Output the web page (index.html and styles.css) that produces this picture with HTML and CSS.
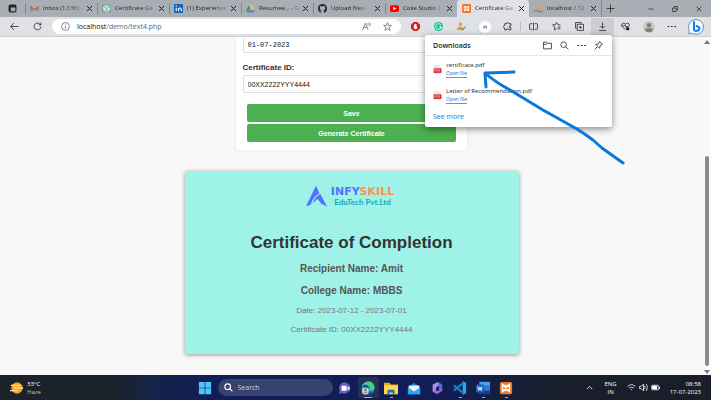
FILE: index.html
```html
<!DOCTYPE html>
<html lang="en">
<head>
<meta charset="utf-8">
<title>Certificate Generator</title>
<link rel="stylesheet" href="styles.css">
</head>
<body>
<header class="tabbar">
  <button class="workspace" aria-label="Tab actions"><svg class="ic" viewBox="0 0 16 16"><rect x="2" y="2" width="12" height="12" rx="2" fill="none" stroke="#222" stroke-width="2"/><path d="M2 2h12v4H2zM2 6h3v7H2z" fill="#222"/></svg></button>
  <nav class="tabs">
    <a class="tab" href="#"><svg class="ic" viewBox="0 0 16 16"><path d="M1 3v10h3V7z" fill="#5b8bd8"/><path d="M15 3v10h-3V7z" fill="#55a66b"/><path d="M1 3l7 6 7-6v4l-7 5-7-5z" fill="#df5547"/></svg><span>Inbox (1,136) -</span><i class="x"></i></a>
    <a class="tab" href="#"><svg class="ic" viewBox="0 0 16 16"><rect width="16" height="16" rx="3" fill="#75ac98"/><g fill="none" stroke="#fff" stroke-width="1.2"><path d="M8 2l5 3v6l-5 3-5-3V5z"/><path d="M5 4l6 4v5M11 4L5 8v4M3 7l5 3 5-3"/></g></svg><span>Certificate Ge</span><i class="x"></i></a>
    <a class="tab" href="#"><svg class="ic" viewBox="0 0 16 16"><rect width="16" height="16" rx="1" fill="#0a66c2"/><path d="M4 7v6M8 13V7m0 3q0-3 2.500-3T13 10v3" fill="none" stroke="#fff" stroke-width="2"/><circle cx="4" cy="4" r="1.300" fill="#fff"/></svg><span>(1) Experience</span><i class="x"></i></a>
    <a class="tab" href="#"><svg class="ic" viewBox="0 0 16 16"><path d="M5.500 2L0 11l3 4 5-9z" fill="#39a266"/><path d="M5.500 2h5L16 11h-5z" fill="#f1c344"/><path d="M5 11h11l-3 4H3z" fill="#4b82dc"/></svg><span>Resumee... - G</span><i class="x"></i></a>
    <a class="tab" href="#"><svg class="ic" viewBox="0 0 16 16"><path d="M8 0a8 8 0 0 0-2.500 15.600V13C3.500 13.500 3 12 2.500 11.500L2 11c2-.3 2 1.500 3.500 1l.5-1.300C3 10.300 3 8 3.200 6.500L4 5l-.1-2L6 4h4l2.100-1L12 5l.8 1.500c.3 2 0 3.800-2.800 4.200l.5 1.500v3.400A8 8 0 0 0 8 0z" fill="#24292f"/></svg><span>Upload files -</span><i class="x"></i></a>
    <a class="tab" href="#"><svg class="ic" viewBox="0 0 16 16"><rect y="2" width="16" height="12" rx="3" fill="#f00"/><path d="M6 5l5 3-5 3z" fill="#fff"/></svg><span>Coke Studio |</span><i class="x"></i></a>
    <a class="tab active" href="#"><svg class="ic" viewBox="0 0 16 16"><rect width="16" height="16" rx="2" fill="#f37623"/><path d="M4 4l8 8M12 4l-8 8M4 4q4 3 8 0v8q-4-3-8 0z" fill="none" stroke="#fff" stroke-width="1.600"/></svg><span>Certificate Ge</span><i class="x"></i></a>
    <a class="tab" href="#"><svg class="ic" viewBox="0 0 16 16"><path d="M1 12L7 2v10zM8 4q5 2 5 8H8z" fill="#f89c2c"/><path d="M0 13q5-3 8 0t8-1" fill="none" stroke="#6c78af" stroke-width="2"/></svg><span>localhost / 12</span><i class="x"></i></a>
  </nav>
  <button class="newtab" aria-label="New tab"><svg class="ic" viewBox="0 0 16 16"><path class="ln" d="M8 1v14M1 8h14"/></svg></button>
  <div class="wincontrols">
    <button aria-label="Minimize"><svg class="small" viewBox="0 0 12 12"><path class="ln" d="M1 6h10"/></svg></button>
    <button aria-label="Restore"><svg class="small" viewBox="0 0 12 12"><path class="ln" d="M1 4h7v7H1zM4 3V1h7v7H9"/></svg></button>
    <button aria-label="Close"><svg class="small" viewBox="0 0 12 12"><path class="ln" d="M1 1l10 10M11 1L1 11"/></svg></button>
  </div>
</header>
<div class="toolbar">
  <button class="tool" aria-label="Back"><svg class="ic" viewBox="0 0 16 16"><path class="ln" d="M15 8H1M7 2L1 8l6 6"/></svg></button>
  <button class="tool" aria-label="Refresh"><svg class="ic" viewBox="0 0 16 16"><path class="ln" d="M14 8a6 6 0 1 1-2-4.500L14 5M14 1v4h-4"/></svg></button>
  <div class="address">
    <svg class="ic" viewBox="0 0 16 16"><circle class="lg" cx="8" cy="8" r="7"/><path class="lg" d="M8 7v5M8 4v1.500"/></svg>
    <p class="url"><b>localhost</b>/demo/text4.php</p>
    <button aria-label="Read aloud"><svg class="ic" viewBox="0 0 16 16"><path class="lg" d="M1 14L6 2l5 12M3 10h6M10 2q2 2 0 4M13 1q3 3 0 7"/></svg></button>
    <button aria-label="Add to favorites"><svg class="ic" viewBox="0 0 16 16"><path class="lg" d="M8 1l2 5h5l-4 3.500 1.500 5.500L8 12l-4.500 3L5 9.500 1 6h5z"/></svg></button>
  </div>
  <button class="tool" aria-label="AdBlock"><svg class="ic" viewBox="0 0 16 16"><path d="M5 0h6l5 5v6l-5 5H5l-5-5V5z" fill="#e01414"/><path d="M5 5v5l2 3h3l2-5-2 1V4H9V3H7v1z" fill="#fff"/></svg></button>
  <button class="tool" aria-label="Grammarly"><svg class="ic" viewBox="0 0 16 16"><circle cx="8" cy="8" r="8" fill="#15c39a"/><path d="M12 5a5 5 0 1 0 1 4H9M11 8l2 1-1 3" fill="none" stroke="#fff" stroke-width="1.600"/></svg></button>
  <button class="tool" aria-label="Verified contacts"><svg class="ic" viewBox="0 0 16 16"><circle cx="6" cy="4" r="3" fill="#f19636"/><path d="M0 14q0-6 6-6 4 0 5 3l-3 3z" fill="#f19636"/><path d="M8 12l2 2 5-6" fill="none" stroke="#36a852" stroke-width="2"/></svg></button>
  <button class="tool" aria-label="Extension"><svg class="disc" viewBox="0 0 16 16"><circle cx="8" cy="8" r="8" fill="#fff"/><path d="M6 6h1.500v4H6zM9 6h1.500v4H9zM6 7.500h4v1H6z" fill="#6674c8"/></svg></button>
  <button class="tool" aria-label="Extensions"><svg class="ic" viewBox="0 0 16 16"><path class="ln" d="M3 3h3q0-2 2-2t2 2h4v4q-3-1-3 1.500t3 1.500v4h-4q0-2-2-2t-2 2H3v-3Q1 11 1 8.500T3 6z"/></svg></button>
  <span class="rule"></span>
  <button class="tool" aria-label="Split screen"><svg class="ic" viewBox="0 0 16 16"><path class="ln" d="M8 1v14M6 3H2q-1 0-1 1v8q0 1 1 1h4M10 3h4q1 0 1 1v8q0 1-1 1h-4"/></svg></button>
  <button class="tool" aria-label="Favorites"><svg class="ic" viewBox="0 0 16 16"><path class="ln" d="M15 5h-4L8 1 6 5H1l4 4-1 5 4-2M10 9h5M10 12h5"/></svg></button>
  <button class="tool" aria-label="Collections"><svg class="ic" viewBox="0 0 16 16"><path class="ln" d="M3 11H1V1h10v2M4 4h11v11H4zM9.500 7v5M7 9.500h5"/></svg></button>
  <button class="tool pressed" aria-label="Downloads"><svg class="ic" viewBox="0 0 16 16"><path class="ln" d="M8 1v10M4 7l4 4 4-4M2 15h12"/></svg></button>
  <button class="tool" aria-label="Browser essentials"><svg class="ic" viewBox="0 0 16 16"><path class="ln" d="M8 14L2 8Q0 5 2 3q3-3 6 1 3-4 6-1 2 2 0 5M1 7h4l2-2 2 5 1-2h3"/><circle cx="12" cy="12" r="3" fill="#222"/></svg></button>
  <button class="tool" aria-label="Profile"><svg class="disc" viewBox="0 0 16 16"><circle cx="8" cy="8" r="8" fill="#cbc8c4"/><circle cx="8" cy="5.500" r="3" fill="#827d79"/><path d="M3 13V9.500h10V13q-5 4-10 0" fill="#827d79"/></svg></button>
  <button class="tool" aria-label="Settings and more"><svg class="ic" viewBox="0 0 16 16"><path d="M1 7h3v2H1zM7 7h3v2H7zM13 7h3v2h-3z" fill="#222"/></svg></button>
  <button class="tool wide" aria-label="Bing chat"><svg class="bing" viewBox="0 0 16 16"><path d="M8 .7A7.300 7.300 0 1 1 4 14L.8 15l.4-4A7.300 7.300 0 0 1 8 .7z" fill="#fff" stroke="#3b93ea"/><path d="M6 3v7q0 2 2 2 3 0 3.500-2.200Q11.700 8 8.500 7" fill="none" stroke="#1480e6" stroke-width="2" stroke-linecap="round"/></svg></button>
</div>
<div class="viewport">
  <main class="page">
    <form class="form">
      <input class="field mono" type="text" value="01-07-2023" aria-label="End date">
      <label for="cid">Certificate ID:</label>
      <input class="field" id="cid" type="text" value="00XX2222YYY4444">
      <div class="actions">
        <button type="button">Save</button>
        <button type="button">Generate Certificate</button>
      </div>
    </form>
    <article class="certificate">
      <div class="brand">
        <svg class="mark" viewBox="0 0 22 22"><path d="M0 22L10.500 0 14 8Q7 12 5 20z" fill="#5271ff"/><path d="M15 9l7 13-6-3-4-5-5 5Q9 12 15 9z" fill="#5271ff"/></svg>
        <div class="names">
          <p class="name">INFY<span>SKILL</span></p>
          <p class="sub">EduTech Pvt.Ltd</p>
        </div>
      </div>
      <h1>Certificate of Completion</h1>
      <h2>Recipient Name: Amit</h2>
      <h2>College Name: MBBS</h2>
      <p class="detail">Date: 2023-07-12 - 2023-07-01</p>
      <p class="detail">Certificate ID: 00XX2222YYY4444</p>
    </article>
  </main>
  <div class="scroll"><i class="up"></i><i class="thumb"></i><i class="down"></i></div>
  <section class="downloads">
    <header>
      <h3>Downloads</h3>
      <button aria-label="Open folder"><svg class="ic" viewBox="0 0 16 16"><path class="ln" d="M1 2h5l2 2h7v10H1zM1 6h5l2-2"/></svg></button>
      <button aria-label="Search downloads"><svg class="ic" viewBox="0 0 16 16"><circle class="ln" cx="6.500" cy="6.500" r="5"/><path class="ln" d="M10 10l5 5"/></svg></button>
      <button aria-label="More options"><svg class="ic" viewBox="0 0 16 16"><path d="M1 7h3v2H1zM7 7h3v2H7zM13 7h3v2h-3z" fill="#222"/></svg></button>
      <button aria-label="Pin"><svg class="ic" viewBox="0 0 16 16"><path class="ln" d="M10 1l5 5-4 2-1 5-7-7 5-1zM6 10l-5 5"/></svg></button>
    </header>
    <div class="file"><svg class="ic" viewBox="0 0 16 16"><path d="M2 0h9l3 3v13H2z" fill="#e8e8e8"/><path d="M1 6h14v8H1z" fill="#d6202f"/><path d="M3 12V8h2v2H3M7 8v4q3 0 2-4zM13 8h-2v4M11 10h2" fill="none" stroke="#f6b9be"/></svg><div><p>certificate.pdf</p><a href="#">Open file</a></div></div>
    <div class="file"><svg class="ic" viewBox="0 0 16 16"><path d="M2 0h9l3 3v13H2z" fill="#e8e8e8"/><path d="M1 6h14v8H1z" fill="#d6202f"/><path d="M3 12V8h2v2H3M7 8v4q3 0 2-4zM13 8h-2v4M11 10h2" fill="none" stroke="#f6b9be"/></svg><div><p>Letter of Recommendation.pdf</p><a href="#">Open file</a></div></div>
    <a class="more" href="#">See more</a>
    <svg class="arrow" viewBox="0 0 144 96"><path d="M33 3L4 4M4 4l1 14M4 4Q14 13 29 21L62 41 96 60Q104 65 112 71L121 79 142 94" fill="none" stroke="#0a78d8" stroke-width="3" stroke-linecap="round" stroke-linejoin="round"/></svg>
  </section>
</div>
<footer class="taskbar">
  <div class="weather"><svg class="app" viewBox="0 0 16 16"><circle cx="8" cy="8" r="6.500" fill="#f9a21c"/><path d="M1 5h11M0 11h9M4 8h11" stroke="#ffd89a" stroke-width="1.500"/></svg><p>33°C<br><span>Haze</span></p></div>
  <div class="apps">
    <button aria-label="Start"><svg class="app" viewBox="0 0 16 16"><path d="M1 1h6.600v6.600H1zM8.400 1H15v6.600H8.400zM1 8.400h6.600V15H1zM8.400 8.400H15V15H8.400z" fill="#4cc7fb"/></svg></button>
    <label class="search"><svg class="ic" viewBox="0 0 16 16"><circle cx="6.500" cy="6.500" r="5" fill="none" stroke="#fff" stroke-width="2"/><path d="M10 10l5 5" stroke="#fff" stroke-width="2"/></svg><input type="text" placeholder="Search" aria-label="Search"></label>
    <button aria-label="Chat"><svg class="app" viewBox="0 0 16 16"><path d="M8 1.500A6.500 6.500 0 1 1 5 14l-4 .5L2 11A6.500 6.500 0 0 1 8 1.500z" fill="#6560bd"/><rect x="4" y="5.500" width="6" height="5.500" rx="1" fill="#fff"/><path d="M10.500 8l2.500-2v5z" fill="#fff"/></svg></button>
    <button class="current" aria-label="Edge"><svg class="app" viewBox="0 0 16 16"><circle cx="8" cy="8" r="7.500" fill="#148bd3"/><path d="M1 6C4-2 15-1 15.500 7q0 4-4 4-3 0-2-2 1-4-3-4Q3 5 1 6z" fill="#49ce80"/><path d="M2 5q5-2 7 2-3 1-1 4 2 2 6 1-3 4-7 3" fill="#0c579d"/><circle cx="5" cy="11.500" r="4" fill="#d1d1ce"/><circle cx="5" cy="10" r="1.500" fill="#777"/><path d="M2.500 13.500q2.500-3 5 0" fill="#777"/></svg></button>
    <button class="open" aria-label="File Explorer"><svg class="app" viewBox="0 0 16 16"><path d="M0 2h6l2 2h8v11H0z" fill="#eea916"/><path d="M0 5h16v10H0z" fill="#fdd454"/><path d="M4 15v-4q0-1 1-1h6q1 0 1 1v4h-2v-2H6v2z" fill="#1672bc"/></svg></button>
    <button aria-label="Mail"><svg class="app" viewBox="0 0 16 16"><path d="M1 7l7-5 7 5v8H1z" fill="#1685d5"/><path d="M2 5h12v4l-6 4-6-4z" fill="#e9f6ff"/><path d="M1 7l7 5 7-5v8H1z" fill="#29a9ee"/></svg></button>
    <button aria-label="Microsoft 365"><svg class="app" viewBox="0 0 16 16"><path d="M9 1L3 4v8l3 2 1-4V7l6-3z" fill="#a98be8"/><path d="M9 1l5 3v7l-4-1V6z" fill="#5268d9"/><path d="M3 11l5 4 6-4v-2l-5 2H6z" fill="#b05fc0"/></svg></button>
    <button class="open" aria-label="Visual Studio Code"><svg class="app" viewBox="0 0 16 16"><path d="M11 0l4 2v12l-4 2z" fill="#2aa5ee"/><path d="M1 5l11 9M1 11L12 2" fill="none" stroke="#167fc9" stroke-width="2.500"/></svg></button>
    <button class="open" aria-label="Word"><svg class="app" viewBox="0 0 16 16"><path d="M4 1h12v14H4z" fill="#2b7cd3"/><path d="M4 1h12v4H4z" fill="#41a5ee"/><path d="M4 11h12v4H4z" fill="#103f91"/><rect y="4" width="9" height="9" rx="1" fill="#185abd"/><path d="M2 6l1 5 1.500-4L6 11l1-5" fill="none" stroke="#fff"/></svg></button>
    <button class="open" aria-label="XAMPP"><svg class="app" viewBox="0 0 16 16"><rect x="1" y="1" width="14" height="14" rx="2" fill="#f37623"/><path d="M4 4l8 8M12 4l-8 8M4 4q4 3 8 0v8q-4-3-8 0z" fill="none" stroke="#fff" stroke-width="1.600"/></svg></button>
  </div>
  <div class="tray">
    <svg class="ic" viewBox="0 0 16 16"><path class="lw" d="M3 11l5-5 5 5"/></svg>
    <p class="lang">ENG<br>IN</p>
    <div class="status">
      <svg class="ic" viewBox="0 0 16 16"><path class="lw" d="M1 6q7-6 14 0M4 9q4-3 8 0M7 12h2"/></svg>
      <svg class="ic" viewBox="0 0 16 16"><path class="lw" d="M1 6h3l4-4v12l-4-4H1zM10 5q2 3 0 6M13 2q4 6 0 12"/></svg>
      <svg class="ic" viewBox="0 0 16 16"><rect class="lw" x="1" y="4" width="13" height="8" rx="2"/><path d="M2 5h9v6H2zM14 7h2v3h-2z" fill="#fff"/></svg>
    </div>
    <p class="clock">08:58<br>17-07-2023</p>
  </div>
</footer>
</body>
</html>
```
FILE: styles.css
```css
* { box-sizing: border-box; }
body, p, h1, h2, h3 { margin: 0; }
body {
  display: flex;
  flex-direction: column;
  min-height: 100vh;
  font: 7px/9px "Open Sans", "Noto Sans", sans-serif;
  color: #222;
  background: #f8f8f8;
}
button { border: 0; padding: 0; background: none; font: inherit; display: flex; align-items: center; justify-content: center; }
a { color: inherit; text-decoration: none; }
svg { display: block; flex: none; }
.ic { width: 9px; height: 9px; }
.small { width: 6px; height: 6px; }
.app { width: 14px; height: 14px; }
.disc { width: 12px; height: 12px; }
.bing { width: 16px; height: 16px; }
.ln, .lg, .lw { fill: none; stroke: #222; stroke-width: 1.4; }
.lg { stroke: #666; }
.lw { stroke: #fff; }

.tabbar { display: flex; height: 17px; background: #a9aeb5; }
.workspace { width: 25px; }
.tabs { display: flex; flex: 0 1 576px; min-width: 0; }
.tab { display: flex; flex: 1; min-width: 0; align-items: center; gap: 4px; padding: 0 5px; position: relative; font-size: 6px; }
.tab::before { content: ""; position: absolute; left: 0; top: 3px; width: 1px; height: 11px; background: #83878d; }
.tab span { flex: 1; white-space: nowrap; mask-image: linear-gradient(90deg, #000 65%, #0004); }
.tab.active { background: #dfe1e5; border-radius: 3px 3px 0 0; }
.tab.active::before, .tab.active + .tab::before { display: none; }
.x { width: 5px; height: 5px; background: linear-gradient(45deg, transparent 43%, #222 43%, #222 57%, transparent 57%), linear-gradient(-45deg, transparent 43%, #222 43%, #222 57%, transparent 57%); }
.newtab { width: 17px; border-left: 1px solid #83878d; }
.wincontrols { display: flex; margin-left: auto; }
.wincontrols button { width: 24px; }

.toolbar { display: flex; align-items: center; height: 19px; padding: 0 2px 0 3px; background: #dfe1e5; }
.tool { flex: none; width: 23px; height: 18px; }
.tool.pressed { background: #cbcdd0; }
.wide { width: 26px; }
.rule { width: 1px; height: 9px; margin: 0 1px; background: #b9bbbf; }
.address { display: flex; flex: 1; align-items: center; gap: 12px; height: 15px; margin: 0 3px; padding: 0 9px; border-radius: 8px; background: #fff; }
.url { flex: 1; margin-left: -5px; color: #666; }
.url b { font-weight: 400; color: #111; }

.viewport { position: relative; display: flex; flex: 1; border-top: 1px solid #cfd0d3; }
.page { flex: 1; display: flex; flex-direction: column; align-items: center; gap: 21px; padding-bottom: 20px; font-family: "Liberation Sans", Arial, sans-serif; overflow: hidden; }
.form { width: 33%; padding: 0 7px 8px; background: #fff; border-radius: 2px; box-shadow: 0 0 5px #0001; }
.form label { display: block; margin: 10px 0 2px; font-size: 8px; line-height: 10px; font-weight: 700; color: #333; }
.field { display: block; width: 100%; height: 18px; padding: 0 4px; border: 1px solid #ddd; border-radius: 2px; font: 7px "Liberation Sans", Arial, sans-serif; color: #111; }
.mono { height: 16px; border-top: 0; font-family: "Liberation Mono", monospace; }
.actions { display: grid; gap: 2px; margin-top: 11px; padding: 0 4px; }
.actions button { height: 18px; border-radius: 2px; background: #4caf50; color: #fff; font-weight: 700; }
.certificate { width: 334px; max-width: 100%; padding: 14px 10px 19px; border-radius: 2px; background: #9ff2e7; box-shadow: 0 1px 4px #0006; text-align: center; }
.brand { display: flex; justify-content: center; gap: 1px; }
.mark { width: 21px; height: 22px; }
.names { display: flex; flex-direction: column; align-items: center; padding-top: 2px; width: 70px; }
.name { color: #5271ff; font: 700 11px/10px "DejaVu Sans", sans-serif; }
.name span { color: #ff914d; }
.sub { color: #12a5b5; font: 700 8px/10px Lato, sans-serif; }
.certificate h1 { margin-top: 26px; font-size: 17px; line-height: 20px; color: #333; }
.certificate h2 { margin-top: 10px; font-size: 10px; line-height: 12px; color: #555; }
.detail { margin-top: 9px; font-size: 8px; line-height: 10px; color: #777; }
.scroll { display: flex; flex-direction: column; align-items: center; justify-content: space-between; width: 8px; padding: 3px 0 1px; background: #fafafa; }
.thumb { width: 4px; flex: 0 0 63%; margin-top: auto; margin-bottom: 4px; border-radius: 2px; background: #8a8a8a; }
.up, .down { width: 6px; height: 4px; background: #777; clip-path: polygon(50% 0, 100% 100%, 0 100%); }
.down { clip-path: polygon(0 0, 100% 0, 50% 100%); }

.downloads { position: absolute; top: -2px; right: 99px; width: 187px; padding-bottom: 5px; background: #fff; border-radius: 2px; box-shadow: 0 2px 7px #0007; }
.downloads header { display: flex; align-items: center; gap: 8px; height: 21px; padding: 0 9px 0 8px; border-bottom: 1px solid #e5e5e5; }
.downloads h3 { flex: 1; font-size: 7px; font-weight: 600; }
.file { display: flex; align-items: center; gap: 4px; height: 26px; padding-left: 8px; font-size: 6px; line-height: 8px; }
.file a { display: inline-block; line-height: 7px; font-size: 5px; color: #0b78d0; border-bottom: 1px solid #4a9edf; }
.more { display: block; margin-top: 4px; padding-left: 8px; font-size: 7px; line-height: 10px; color: #0b78d0; }
.arrow { position: absolute; left: 56px; top: 34px; width: 144px; height: 96px; overflow: visible; }

.taskbar { display: grid; grid-template-columns: 1fr auto 1fr; align-items: center; height: 25px; padding: 0 10px; color: #fff; font-size: 6px; line-height: 8px; background: linear-gradient(90deg, #1c222c 0 16%, #142349 22%, #101d56 30% 62%, #181e34 74%, #191e2a 80%); }
.weather { display: flex; align-items: center; gap: 3px; }
.weather span { color: #bbc0c8; }
.apps { display: flex; align-items: center; gap: 2px; }
.apps button { position: relative; width: 21px; height: 21px; border-radius: 2px; }
.apps .current { background: #263054; }
.open::after, .current::after { content: ""; position: absolute; bottom: 0; width: 3px; height: 1px; background: #a4a8b5; }
.current::after { width: 8px; background: #54c7f7; }
.search { display: flex; align-items: center; gap: 5px; width: 115px; height: 17px; padding: 0 6px; border-radius: 9px; background: #36426f; }
.search input { flex: 1; min-width: 0; padding: 0; border: 0; background: none; font: inherit; font-size: 7px; color: #fff; }
.search input::placeholder { color: #cdd1df; }
.tray { display: flex; align-items: center; justify-content: flex-end; gap: 10px; }
.lang { text-align: center; }
.status { display: flex; gap: 3px; }
.clock { text-align: right; }
```
